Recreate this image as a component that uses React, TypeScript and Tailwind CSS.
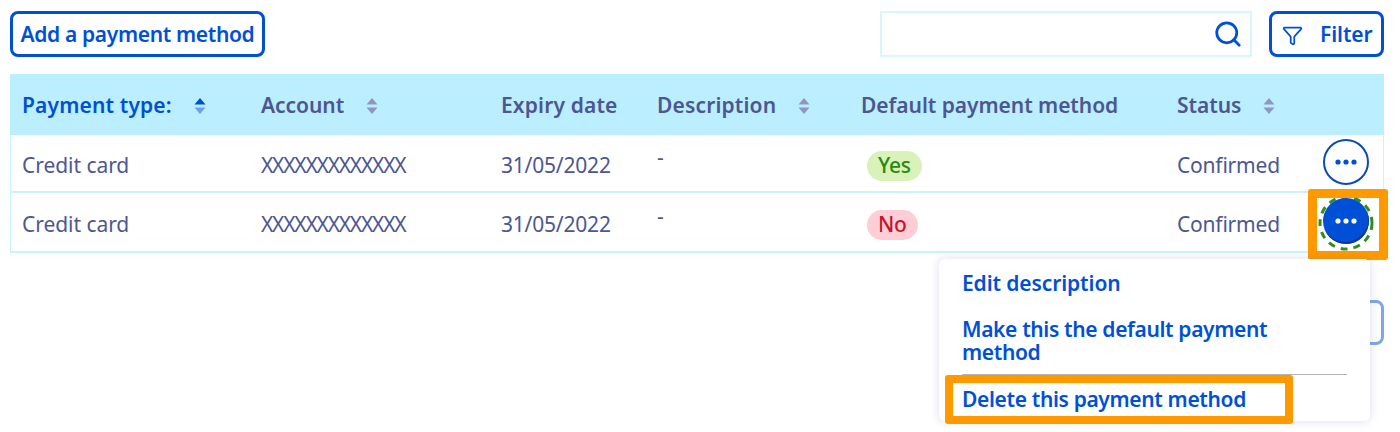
import { Search, Filter } from "lucide-react";

const font = { fontFamily: '"Noto Sans", sans-serif' };

function SortIcon({ active }: { active?: boolean }) {
  return (
    <svg width="12" height="18" viewBox="0 0 12 18" className="shrink-0">
      <path d="M6 1 L11.5 7.5 H0.5 Z" fill={active ? "#0050d7" : "#8f95c4"} />
      <path d="M6 17 L11.5 10.5 H0.5 Z" fill={active ? "#6f9ee8" : "#8f95c4"} />
    </svg>
  );
}

function HeaderCell({ label, active, sort = true, wide }: { label: string; active?: boolean; sort?: boolean; wide?: boolean }) {
  return (
    <div className="flex items-center gap-[22px]">
      <span className={`text-[21px] font-semibold whitespace-nowrap ${wide ? "tracking-[0.15px]" : "tracking-[-0.05px]"} ${active ? "text-[#0050d7]" : "text-[#4d5693]"}`}>{label}</span>
      {sort && <SortIcon active={active} />}
    </div>
  );
}

function Row({ masked, badge, border }: { masked: string; badge: "Yes" | "No"; border?: boolean }) {
  return (
    <div className={`grid grid-cols-[239px_240px_156px_204px_316px_1fr] items-center h-[58px] pl-[11px] pt-[5px] text-[21px] text-[#4d5693] ${border ? "border-b-2 border-[#c8f3ff]" : ""}`}>
      <span className="tracking-[-0.05px]">Credit card</span>
      <span className="whitespace-nowrap tracking-[-1.2px]">{masked}</span>
      <span className="tracking-[-0.2px]">31/05/2022</span>
      <span className="-mt-[15px]">-</span>
      <span className="pl-[6px] tracking-[-0.3px]">
        {badge === "Yes" ? (
          <span className="inline-block rounded-full bg-[#d9f2b9] px-[11px] h-[30px] leading-[29px] font-medium text-[#2b8a0e]">Yes</span>
        ) : (
          <span className="inline-block rounded-full bg-[#ffcdd6] px-[11px] h-[30px] leading-[29px] font-medium text-[#c4152a]">No</span>
        )}
      </span>
      <span className="tracking-[-0.2px]">Confirmed</span>
    </div>
  );
}

function Dots({ color }: { color: string }) {
  return (
    <svg width="22" height="6" viewBox="0 0 22 6">
      <circle cx="3" cy="3" r="2.6" fill={color} />
      <circle cx="11" cy="3" r="2.6" fill={color} />
      <circle cx="19" cy="3" r="2.6" fill={color} />
    </svg>
  );
}

export default function App() {
  return (
    <div className="relative w-[1400px] h-[432px] overflow-hidden bg-white px-[10px] pt-[11px]" style={font}>
      {/* Toolbar */}
      <div className="flex items-center h-[46px] w-[1374px]">
        <button className="h-[46px] w-[255px] rounded-[8px] border-[3px] border-[#0050d7] bg-white pt-[2px] text-[21px] font-semibold tracking-[-0.35px] text-[#0050d7] whitespace-nowrap">
          Add a payment method
        </button>
        <div className="ml-[615px] flex h-[46px] w-[372px] items-center justify-end border-2 border-[#d8f6ff] pr-[7px]">
          <Search size={30} strokeWidth={2.2} className="text-[#0050d7]" />
        </div>
        <button className="ml-[17px] flex h-[46px] w-[115px] items-center gap-[17px] rounded-[8px] border-[3px] border-[#0050d7] pl-[10px] pt-[2px] text-[21px] font-semibold tracking-[-0.1px] text-[#0050d7]">
          <Filter size={21} strokeWidth={2} />
          Filter
        </button>
      </div>

      {/* Table */}
      <div className="mt-[17px] w-[1374px] border-x border-b-2 border-[#c8f3ff]">
        <div className="grid grid-cols-[239px_240px_156px_204px_316px_1fr] items-center h-[61px] pl-3 pt-[3px] bg-[#bbefff] -mx-px">
          <HeaderCell label="Payment type:" active wide />
          <HeaderCell label="Account" />
          <HeaderCell label="Expiry date" sort={false} wide />
          <HeaderCell label="Description" wide />
          <HeaderCell label="Default payment method" sort={false} />
          <HeaderCell label="Status" />
        </div>
        <Row masked="XXXXXXXXXXXXX" badge="Yes" border />
        <Row masked="XXXXXXXXXXXXX" badge="No" />
      </div>

      {/* Row action buttons */}
      <button className="absolute left-[1323px] top-[139px] flex h-[46px] w-[46px] items-center justify-center rounded-full border-[2px] border-[#0a4bb5] bg-white">
        <Dots color="#0050d7" />
      </button>
      <div className="absolute left-[1308px] top-[189px] h-[71px] w-[80px] overflow-hidden rounded-[3px] border-[9px] border-[#ff9900] bg-white">
        <svg width="56" height="56" viewBox="0 0 56 56" className="absolute left-[1px] top-[-3px]">
          <circle cx="28" cy="28" r="26" fill="none" stroke="#2f8f1d" strokeWidth="3" strokeDasharray="7 6" />
        </svg>
        <button className="absolute left-[6px] top-[0px] flex h-[46px] w-[46px] items-center justify-center rounded-full bg-[#0050d7] shadow-[inset_-1px_-2px_0_#0a3a96]">
          <Dots color="#ffffff" />
        </button>
      </div>

      {/* Button hidden behind the menu */}
      <div className="absolute left-[1340px] top-[300px] h-[45px] w-[44px] rounded-[8px] border-[3px] border-[#7ea6e8]" />

      {/* Dropdown menu */}
      <div className="absolute left-[939px] top-[259px] h-[162px] w-[431px] rounded-[6px] bg-white px-[23px] pt-[10px] text-[21px] font-semibold tracking-[-0.35px] text-[#0050d7] shadow-[0_0_10px_rgba(90,90,170,0.22)]">
        <div className="h-[29px] leading-[29px] tracking-[-0.1px]">Edit description</div>
        <div className="mt-[20px] w-[340px] leading-[23px]">Make this the default payment method</div>
        <div className="mt-[10px] h-px w-[385px] bg-[#b5b5b5]" />
        <div className="mt-[10px] leading-[28px]">Delete this payment method</div>
      </div>

      {/* Highlight round the delete entry */}
      <div className="absolute left-[945px] top-[375px] h-[49px] w-[348px] rounded-[3px] border-[8px] border-[#ff9900]" />
    </div>
  );
}
